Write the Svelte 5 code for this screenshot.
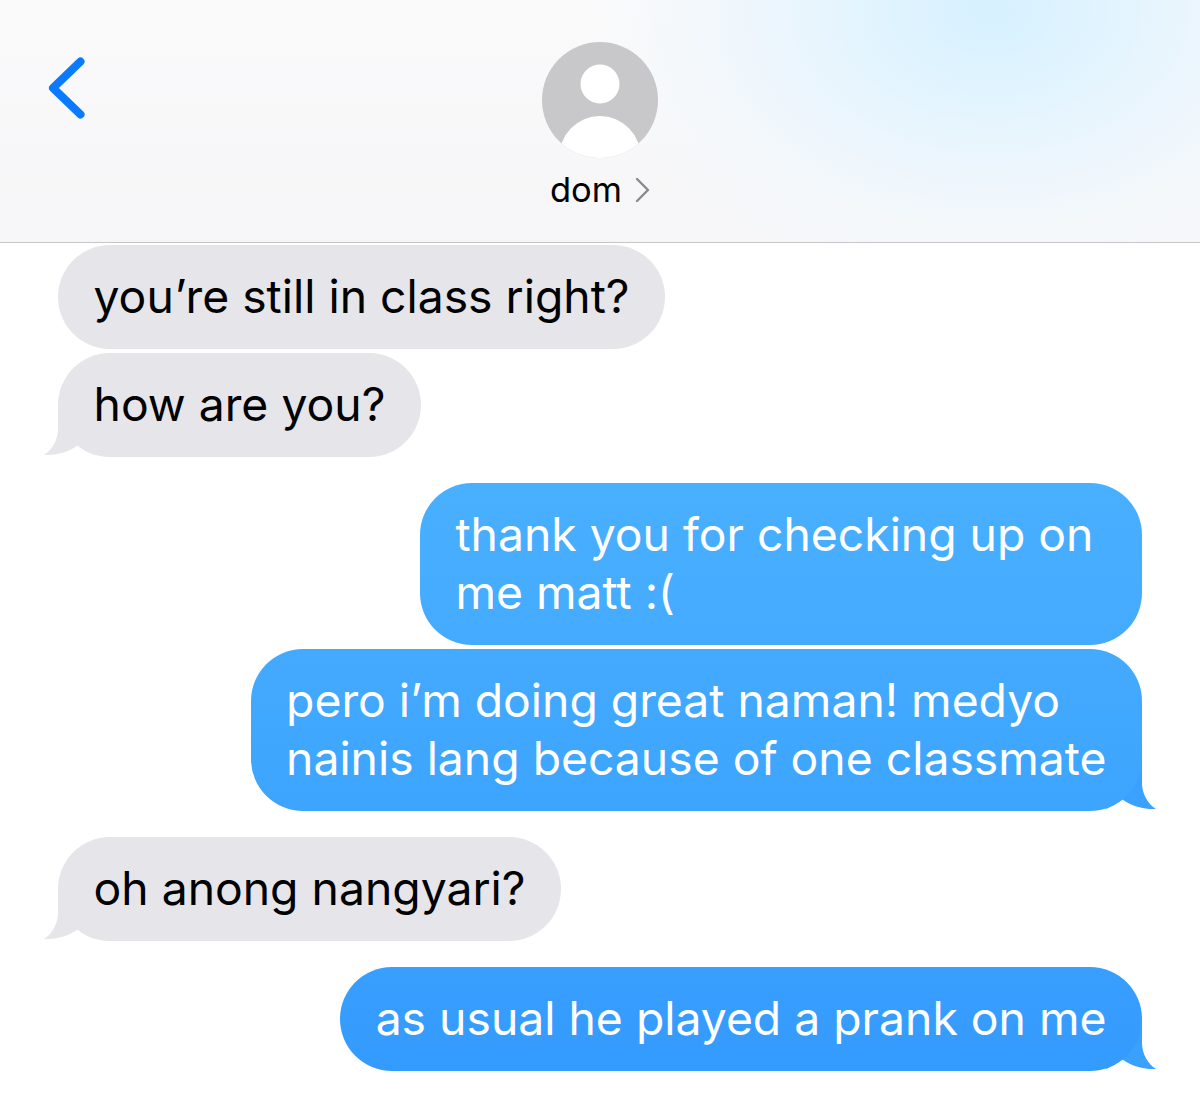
<script lang="ts">
    interface Message {
        text: string;
        mine: boolean;
        tail: boolean;
        newGroup: boolean;
    }

    const messages: Message[] = [
        { text: 'you’re still in class right?', mine: false, tail: false, newGroup: false },
        { text: 'how are you?', mine: false, tail: true, newGroup: false },
        { text: 'thank you for checking up on \nme matt :(', mine: true, tail: false, newGroup: true },
        { text: 'pero i’m doing great naman! medyo\nnainis lang because of one classmate', mine: true, tail: true, newGroup: false },
        { text: 'oh anong nangyari?', mine: false, tail: true, newGroup: true },
        { text: 'as usual he played a prank on me', mine: true, tail: true, newGroup: true }
    ];
</script>

<div class="thread">
    <header class="top-bar">
        <div class="back">
            <svg width="40" height="66" viewBox="0 0 40 66" fill="none">
                <path d="M32.5 6.5 L5 33 L32.5 59.5" stroke="#0a7aff" stroke-width="8" stroke-linecap="round" stroke-linejoin="round" />
            </svg>
        </div>
        <div class="contact">
            <svg class="avatar" width="116" height="116" viewBox="0 0 116 116">
                <defs>
                    <clipPath id="avatar-clip"><circle cx="58" cy="58" r="58" /></clipPath>
                </defs>
                <circle cx="58" cy="58" r="58" fill="#c8c8ca" />
                <circle cx="58" cy="42" r="19.5" fill="#fff" />
                <ellipse cx="58" cy="116" rx="41" ry="42" fill="#fff" clip-path="url(#avatar-clip)" />
            </svg>
            <div class="name">
                <span>dom</span>
                <svg width="15" height="26" viewBox="0 0 15 26" fill="none">
                    <path d="M2 2 L13 13 L2 24" stroke="#8a8a8e" stroke-width="2.4" stroke-linecap="round" stroke-linejoin="round" />
                </svg>
            </div>
        </div>
    </header>

    <main class="messages">
        {#each messages as msg}
            <div class="row" class:mine={msg.mine} class:new-group={msg.newGroup}>
                <div class="bubble" class:mine={msg.mine}>{msg.text}{#if msg.tail}<svg class="tail" width="50" height="54" viewBox="0 -12 50 54"><path d="M14 -12 V14 C14 25 8 35 0 40 C11 40.5 24 37.5 33.5 30.5 C38 34 44 37 50 40 V-12 Z" /></svg>{/if}</div>
            </div>
        {/each}
    </main>
</div>

<style>
    :global(body) {
        background: #fff;
    }

    .thread {
        font-family: Inter, "Liberation Sans", sans-serif;
        height: 1094px;
        overflow: hidden;
    }

    .top-bar {
        display: grid;
        grid-template-columns: 1fr auto 1fr;
        height: 242px;
        border-bottom: 1px solid #c6c6c8;
        background:
            radial-gradient(ellipse 390px 280px at 990px 10px, #d6f1ff 0%, #e2f4fe 32%, #edf6fd 58%, rgba(243, 248, 251, 0.8) 80%, rgba(247, 248, 250, 0) 100%),
            linear-gradient(180deg, #fafafb 0%, #f6f6f8 100%);
    }

    .back {
        padding: 55px 0 0 47.5px;
    }

    .back svg {
        display: block;
    }

    .contact {
        display: flex;
        flex-direction: column;
        align-items: center;
        padding-top: 42px;
    }

    .avatar {
        display: block;
    }

    .name {
        display: flex;
        align-items: center;
        gap: 13px;
        margin-top: 11px;
        font-size: 34.5px;
        line-height: 42px;
        color: #000;
    }

    .messages {
        display: flex;
        flex-direction: column;
        gap: 4px;
        padding: 2px 58px 0;
        isolation: isolate;
    }

    .row {
        display: flex;
    }

    .row.mine {
        justify-content: flex-end;
    }

    .row.new-group {
        margin-top: 22px;
    }

    .bubble {
        position: relative;
        padding: 22px 35.5px 24px;
        border-radius: 52px;
        font-size: 46.3px;
        line-height: 58px;
        white-space: pre;
        color: #000;
        background: #e5e5ea;
    }

    .bubble.mine {
        color: #fff;
        background: linear-gradient(180deg, #49b0ff 483px, #349bfe 1072px) fixed;
    }

    /* sits behind the bubble so only the tip shows */
    .tail {
        position: absolute;
        left: -14px;
        bottom: 0;
        z-index: -1;
        fill: #e5e5ea;
    }

    .bubble.mine .tail {
        left: auto;
        right: -14px;
        transform: scaleX(-1);
        fill: #3ba1fe;
    }
</style>
